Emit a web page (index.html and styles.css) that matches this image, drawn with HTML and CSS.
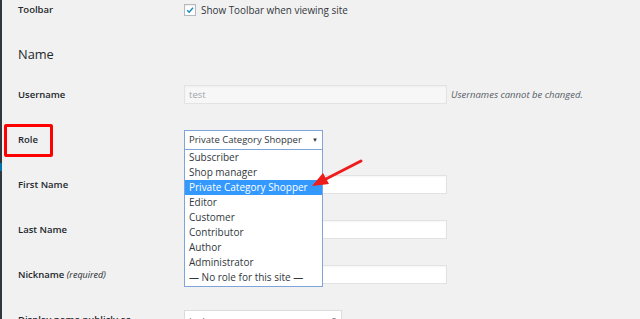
FILE: index.html
```html
<!DOCTYPE html>
<html>
<head>
<meta charset="utf-8">
<link rel="stylesheet" href="styles.css">
</head>
<body>
<div class="screen">
  <div class="adminbar-edge"><span class="edge-accent"></span></div>
  <div class="main">
    <div class="row row-toolbar">
      <div class="label">Toolbar</div>
      <div class="field">
        <label class="check">
          <span class="box"><svg viewBox="0 0 12 12" width="12" height="12"><path d="M2.6 6.2 L5 8.6 L9.6 3.2" fill="none" stroke="#1e8cbe" stroke-width="1.8"/></svg></span>
          <span>Show Toolbar when viewing site</span>
        </label>
      </div>
    </div>
    <div class="row-heading"><h2>Name</h2></div>
    <div class="row">
      <div class="label">Username</div>
      <div class="field">
        <div class="input disabled">test</div>
        <span class="desc">Usernames cannot be changed.</span>
      </div>
    </div>
    <div class="row">
      <div class="label role-label">Role<span class="highlight-box"></span></div>
      <div class="field">
        <div class="select-wrap">
          <div class="select focused"><span>Private Category Shopper</span><span class="caret">▼</span></div>
          <ul class="dropdown">
            <li>Subscriber</li>
            <li>Shop manager</li>
            <li class="active">Private Category Shopper</li>
            <li>Editor</li>
            <li>Customer</li>
            <li>Contributor</li>
            <li>Author</li>
            <li>Administrator</li>
            <li>— No role for this site —</li>
          </ul>
          <svg class="arrow" width="70" height="40" viewBox="0 0 70 40">
            <line x1="59" y1="12" x2="20" y2="32" stroke="#ee1c1c" stroke-width="3" stroke-linecap="round"/>
            <polygon points="10,37 21,24 27,35" fill="#ee1c1c"/>
          </svg>
        </div>
      </div>
    </div>
    <div class="row">
      <div class="label">First Name</div>
      <div class="field"><div class="input"></div></div>
    </div>
    <div class="row">
      <div class="label">Last Name</div>
      <div class="field"><div class="input"></div></div>
    </div>
    <div class="row">
      <div class="label">Nickname <em>(required)</em></div>
      <div class="field"><div class="input"></div></div>
    </div>
    <div class="row">
      <div class="label">Display name publicly as</div>
      <div class="field"><div class="select small"><span>test</span><span class="caret">▼</span></div></div>
    </div>
  </div>
</div>
</body>
</html>
```
FILE: styles.css
```css
* { box-sizing: border-box; }
html, body { margin: 0; padding: 0; }
body {
  background: #f1f1f1;
  font-family: "Open Sans", "Noto Sans", sans-serif;
  font-size: 9.5px;
  color: #23282d;
  overflow: hidden;
  width: 640px;
  height: 319px;
}
.screen { display: flex; height: 319px; overflow: hidden; }
.adminbar-edge {
  width: 2px;
  background: #32373c;
  position: relative;
  flex: none;
}
.edge-accent {
  position: absolute;
  left: 0; top: 163px;
  width: 2px; height: 8px;
  background: #0073aa;
}
.main { flex: 1; padding-left: 16px; }
.row { display: flex; align-items: center; height: 45px; }
.row-toolbar { height: 19px; }
.label {
  width: 166px;
  flex: none;
  font-weight: 600;
  color: #23282d;
}
.label em { font-weight: 400; font-size: 9px; }
.field { display: flex; align-items: center; flex: 1; }
.check { display: flex; align-items: center; gap: 5px; color: #32373c; font-size: 9.9px; }
.box {
  width: 12px; height: 12px;
  border: 1px solid #b4b9be;
  background: #fff;
  display: flex; align-items: center; justify-content: center;
  box-shadow: inset 0 1px 2px rgba(0,0,0,.08);
}
.box svg { display: block; }
.row-heading { height: 53px; display: flex; align-items: flex-end; padding-bottom: 11px; }
h2 { margin: 0; font-size: 12.8px; font-weight: 400; color: #23282d; line-height: 1; }
.input {
  width: 263px; height: 19px;
  background: #fff;
  border: 1px solid #e2e2e2;
  box-shadow: inset 0 1px 2px rgba(0,0,0,.04);
  padding: 0 4px;
  line-height: 17px;
}
.input.disabled { background: #f7f7f7; color: #a0a5aa; border-color: #e3e3e3; }
.desc { margin-left: 4px; font-style: italic; color: #555d66; font-size: 9.5px; }
.role-label { position: relative; }
.highlight-box {
  position: absolute;
  left: -14px; top: -9px;
  width: 49px; height: 33px;
  border: 3px solid #ff0000;
  border-radius: 2px;
}
.select-wrap { position: relative; }
.select {
  width: 139px; height: 20px;
  background: #fff;
  border: 1px solid #dcdcdc;
  display: flex; align-items: center; justify-content: space-between;
  padding: 0 4px 0 4px;
  color: #32373c;
}
.select.focused { border-color: #7fa4dc; }
.select.small { width: 158px; margin-top: 1px; }
.caret { font-size: 6px; color: #32373c; }
.dropdown {
  position: absolute;
  left: 0; top: 20px;
  width: 139px;
  margin: 0; padding: 0;
  list-style: none;
  background: #fff;
  border: 1px solid #7fa4dc;
  border-top: none;
  z-index: 2;
}
.dropdown li {
  height: 15px;
  line-height: 15px;
  padding-left: 4px;
  color: #32373c;
  font-size: 10px;
  white-space: nowrap;
}
.dropdown li.active { background: #3399ff; color: #fff; }
.dropdown li:last-child { margin-bottom: 1px; }
.arrow { position: absolute; left: 118px; top: 19px; z-index: 3; }
```
